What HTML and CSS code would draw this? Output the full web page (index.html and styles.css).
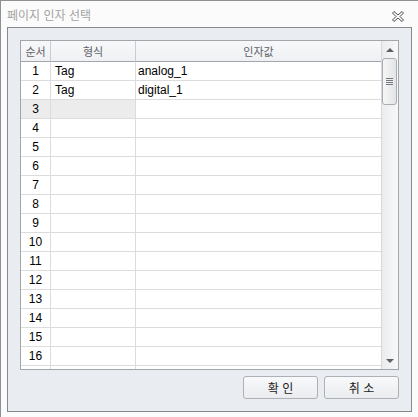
FILE: index.html
```html
<!DOCTYPE html>
<html lang="ko">
<head>
<meta charset="utf-8">
<title>페이지 인자 선택</title>
<link rel="stylesheet" href="styles.css">
</head>
<body>
<div class="window">
  <div class="titlebar">
    <span class="title">페이지 인자 선택</span>
    <svg class="close" width="12" height="11" viewBox="0 0 12 11">
      <polygon points="0.5,2 2,0.5 6,4 10,0.5 11.5,2 8,5.5 11.5,9 10,10.5 6,7 2,10.5 0.5,9 4,5.5" fill="#fff" stroke="#4a4a4a" stroke-width="1" stroke-linejoin="round"/>
    </svg>
  </div>
  <div class="panel">
    <div class="grid">
      <div class="table">
        <div class="row head"><div class="cell">순서</div><div class="cell">형식</div><div class="cell">인자값</div></div>
        <div class="row"><div class="cell num">1</div><div class="cell kind">Tag</div><div class="cell val">analog_1</div></div>
        <div class="row"><div class="cell num">2</div><div class="cell kind">Tag</div><div class="cell val">digital_1</div></div>
        <div class="row current"><div class="cell num">3</div><div class="cell kind"></div><div class="cell val"></div></div>
        <div class="row"><div class="cell num">4</div><div class="cell kind"></div><div class="cell val"></div></div>
        <div class="row"><div class="cell num">5</div><div class="cell kind"></div><div class="cell val"></div></div>
        <div class="row"><div class="cell num">6</div><div class="cell kind"></div><div class="cell val"></div></div>
        <div class="row"><div class="cell num">7</div><div class="cell kind"></div><div class="cell val"></div></div>
        <div class="row"><div class="cell num">8</div><div class="cell kind"></div><div class="cell val"></div></div>
        <div class="row"><div class="cell num">9</div><div class="cell kind"></div><div class="cell val"></div></div>
        <div class="row"><div class="cell num">10</div><div class="cell kind"></div><div class="cell val"></div></div>
        <div class="row"><div class="cell num">11</div><div class="cell kind"></div><div class="cell val"></div></div>
        <div class="row"><div class="cell num">12</div><div class="cell kind"></div><div class="cell val"></div></div>
        <div class="row"><div class="cell num">13</div><div class="cell kind"></div><div class="cell val"></div></div>
        <div class="row"><div class="cell num">14</div><div class="cell kind"></div><div class="cell val"></div></div>
        <div class="row"><div class="cell num">15</div><div class="cell kind"></div><div class="cell val"></div></div>
        <div class="row"><div class="cell num">16</div><div class="cell kind"></div><div class="cell val"></div></div>
        <div class="row"><div class="cell num"></div><div class="cell kind"></div><div class="cell val"></div></div>
      </div>
      <div class="scrollbar">
        <div class="sb-btn"><span class="tri-up"></span></div>
        <div class="thumb"><span class="grip"></span></div>
        <div class="sb-space"></div>
        <div class="sb-btn"><span class="tri-down"></span></div>
      </div>
    </div>
    <div class="buttons">
      <button class="btn">확 인</button>
      <button class="btn">취 소</button>
    </div>
  </div>
</div>
</body>
</html>
```
FILE: styles.css
```css
html, body {
  margin: 0;
  padding: 0;
  background: #fbfbfb;
}
body {
  font-family: "Liberation Sans", "Noto Sans CJK KR", sans-serif;
  font-size: 12px;
  color: #000;
}
.window {
  width: 418px;
  height: 417px;
  box-sizing: border-box;
  border-left: 1px solid #8e9093;
  border-top: 1px solid #8e9093;
  background: #fbfbfb;
}
.titlebar {
  height: 26px;
  display: flex;
  justify-content: space-between;
  align-items: flex-start;
  padding-left: 6px;
  padding-right: 14px;
}
.title {
  font-family: "Noto Sans CJK KR", sans-serif;
  font-size: 12px;
  line-height: 16px;
  padding-top: 6px;
  color: #a3a3a3;
}
.close {
  margin-top: 10px;
  display: block;
}
.panel {
  margin: 0 6px;
  width: 405px;
  height: 385px;
  box-sizing: border-box;
  border: 1px solid #85898e;
  background: #e9ecf0;
  padding: 12px;
  display: flex;
  flex-direction: column;
  gap: 6px;
}
.grid {
  width: 379px;
  height: 330px;
  box-sizing: border-box;
  border: 1px solid #a2a6ab;
  background: #fff;
  display: flex;
  overflow: hidden;
}
.table {
  width: 360px;
  overflow: hidden;
}
.row {
  display: grid;
  grid-template-columns: 30px 85px 245px;
  height: 19px;
}
.cell {
  box-sizing: border-box;
  border-right: 1px solid #dcdcdc;
  border-bottom: 1px solid #dcdcdc;
  line-height: 18px;
  white-space: nowrap;
  overflow: hidden;
}
.cell:last-child {
  border-right: none;
}
.row.head {
  height: 21px;
  background: linear-gradient(#f7f8fa, #eef0f3);
}
.row.head .cell {
  border-bottom: 1px solid #a2a6ab;
  border-right-color: #c9cdd2;
  text-align: center;
  font-family: "Noto Sans CJK KR", sans-serif;
  font-size: 11px;
  line-height: 20px;
  color: #5e6166;
}
.num {
  text-align: center;
}
.kind {
  padding-left: 4px;
}
.val {
  padding-left: 2px;
}
.row.current .num,
.row.current .kind {
  background: #ececec;
}
.scrollbar {
  width: 17px;
  box-sizing: border-box;
  border-left: 1px solid #d6d8db;
  background: linear-gradient(to right, #ebecee, #f8f8f9);
  display: flex;
  flex-direction: column;
}
.sb-btn {
  height: 17px;
  display: flex;
  align-items: center;
  justify-content: center;
}
.tri-up {
  width: 0;
  height: 0;
  border-left: 4px solid transparent;
  border-right: 4px solid transparent;
  border-bottom: 4px solid #5c5f63;
}
.tri-down {
  width: 0;
  height: 0;
  border-left: 4px solid transparent;
  border-right: 4px solid transparent;
  border-top: 4px solid #5c5f63;
}
.thumb {
  width: 15px;
  height: 47px;
  box-sizing: border-box;
  border: 1px solid #a9adb3;
  border-radius: 3px;
  background: linear-gradient(to right, #f6f6f7, #e3e4e6);
  display: flex;
  align-items: center;
  justify-content: center;
}
.grip {
  width: 7px;
  height: 7px;
  background: repeating-linear-gradient(to bottom, #76797d 0 1px, transparent 1px 2px);
}
.sb-space {
  flex: 1;
}
.buttons {
  display: flex;
  justify-content: flex-end;
  gap: 6px;
  width: 379px;
}
.btn {
  width: 75px;
  height: 23px;
  box-sizing: border-box;
  border: 1px solid #adb0b4;
  border-radius: 3px;
  background: linear-gradient(#f8f9fa, #eaecef);
  font-family: "Noto Sans CJK KR", sans-serif;
  font-size: 12px;
  line-height: 20px;
  color: #1c1c1c;
  padding: 0;
}
```
